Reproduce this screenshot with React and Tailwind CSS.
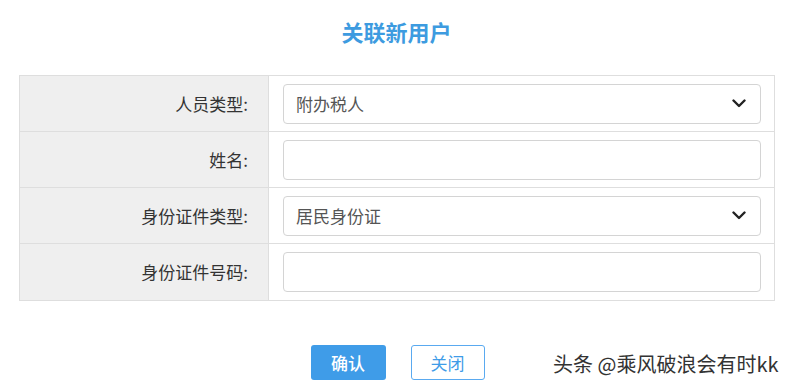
import React from 'react';

const font = { fontFamily: '"Microsoft YaHei", "Noto Sans CJK SC", sans-serif' };

function Chevron() {
  return (
    <svg width="14" height="9" viewBox="0 0 14 9" className="shrink-0">
      <path d="M1.5 1.5 L7 7 L12.5 1.5" fill="none" stroke="#222" strokeWidth="2.4" strokeLinecap="round" strokeLinejoin="round" />
    </svg>
  );
}

function Row({ label, value, select }) {
  return (
    <div className="flex h-[56px] border-b border-[#dedede] last:border-b-0">
      <div className="w-[249px] shrink-0 bg-[#efefef] border-r border-[#dedede] flex items-center justify-end pr-[20px] text-[17px] text-[#333]">
        {label}:
      </div>
      <div className="flex-1 flex items-center pl-[14px] pr-[13px]">
        <div className="w-full h-[40px] border border-[#d4d4d4] rounded-[4px] bg-white flex items-center justify-between pl-[12px] pr-[14px] text-[17px] text-[#555]">
          <span>{value}</span>
          {select && <Chevron />}
        </div>
      </div>
    </div>
  );
}

export default function App() {
  return (
    <div className="relative w-[793px] h-[386px] bg-white overflow-hidden" style={font}>
      <h1 className="pt-[18px] text-center text-[22px] font-bold text-[#3d9be0] leading-[27px]">关联新用户</h1>

      <div className="mt-[30px] ml-[19px] w-[756px] border border-[#dedede]">
        <Row label="人员类型" value="附办税人" select />
        <Row label="姓名" value="" />
        <Row label="身份证件类型" value="居民身份证" select />
        <Row label="身份证件号码" value="" />
      </div>

      <div className="mt-[44px] flex justify-center gap-[25px] pl-[2px]">
        <button className="w-[75px] h-[35px] rounded-[3px] bg-[#3f9ce8] text-white text-[17px] font-medium">确认</button>
        <button className="w-[74px] h-[35px] rounded-[3px] bg-white border border-[#5aaaf0] text-[#3f9ce8] text-[17px]">关闭</button>
      </div>

      <div className="absolute left-[553px] top-[352px] text-[20px] leading-[24px] text-[#333] [text-shadow:0_0_2px_#fff]">头条 @乘风破浪会有时kk</div>
    </div>
  );
}
